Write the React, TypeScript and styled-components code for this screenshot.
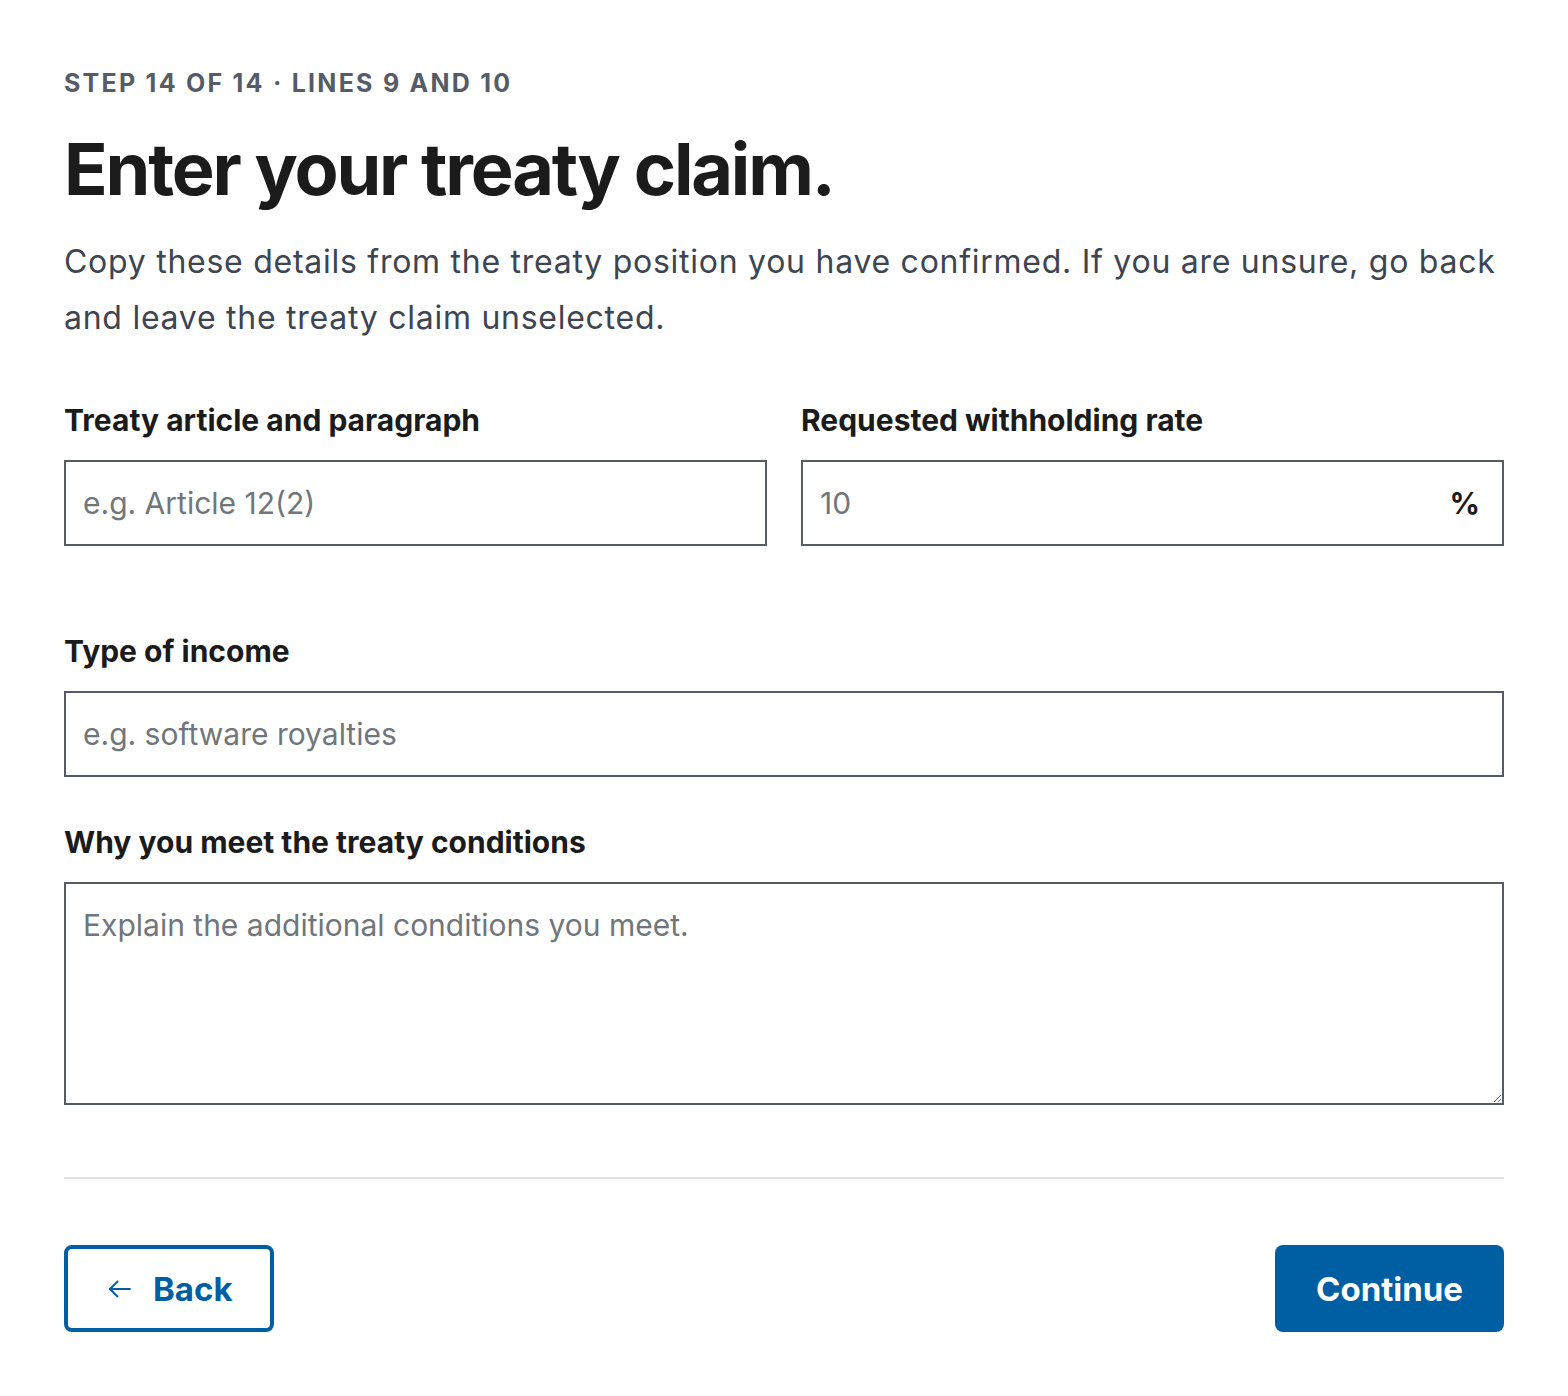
import React from 'react';
import styled, { createGlobalStyle } from 'styled-components';

const GlobalStyle = createGlobalStyle`
  * { box-sizing: border-box; }
  body {
    margin: 0;
    background: #ffffff;
    font-family: Inter, "Noto Sans", "Liberation Sans", sans-serif;
    color: #1b1b1b;
  }
`;

const Page = styled.main`
  padding: 64px 64px 64px;
  max-width: 1568px;
`;

const Eyebrow = styled.div`
  font-size: 25px;
  line-height: 38px;
  font-weight: 700;
  letter-spacing: 0.09em;
  text-transform: uppercase;
  color: #565c65;
`;

const Heading = styled.h1`
  margin: 24px 0 0;
  font-size: 72px;
  line-height: 86px;
  font-weight: 700;
  letter-spacing: -0.03em;
  color: #1b1b1b;
`;

const Lead = styled.p`
  margin: 22px 0 0;
  font-size: 32px;
  line-height: 56px;
  letter-spacing: 0.023em;
  color: #3d4551;
  max-width: 1440px;
`;

const Form = styled.form`
  margin-top: 55px;
  display: flex;
  flex-direction: column;
`;

const Row = styled.div<{ $cols?: number; $gapAfter?: number }>`
  display: grid;
  grid-template-columns: repeat(${p => p.$cols ?? 1}, 1fr);
  column-gap: 34px;
  margin-bottom: ${p => p.$gapAfter ?? 0}px;
`;

const Field = styled.div`
  display: flex;
  flex-direction: column;
`;

const Label = styled.label`
  font-size: 30px;
  line-height: 38px;
  font-weight: 700;
  color: #1b1b1b;
  margin-bottom: 21px;
`;

const InputWrap = styled.div`
  position: relative;
  display: flex;
`;

const TextInput = styled.input<{ $suffix?: boolean }>`
  width: 100%;
  height: 86px;
  border: 2px solid #565c65;
  border-radius: 0;
  padding: 0 ${p => (p.$suffix ? '72px' : '17px')} 0 17px;
  font-family: inherit;
  font-size: 30px;
  color: #1b1b1b;
  background: #fff;
  outline: none;
  &::placeholder { color: #71767a; }
`;

const Suffix = styled.span`
  position: absolute;
  right: 24px;
  top: 50%;
  transform: translateY(-50%);
  font-size: 30px;
  font-weight: 700;
  color: #1b1b1b;
`;

const TextArea = styled.textarea`
  width: 100%;
  height: 223px;
  border: 2px solid #565c65;
  border-radius: 0;
  padding: 21px 17px;
  font-family: inherit;
  font-size: 30px;
  line-height: 40px;
  color: #1b1b1b;
  resize: vertical;
  outline: none;
  display: block;
  &::placeholder { color: #71767a; }
`;

const Divider = styled.hr`
  border: 0;
  border-top: 2px solid #dfe1e2;
  margin: 72px 0 66px;
`;

const Actions = styled.div`
  display: flex;
  justify-content: space-between;
  align-items: center;
`;

const Button = styled.button<{ $variant: 'primary' | 'outline' }>`
  height: 87px;
  border-radius: 8px;
  font-family: inherit;
  font-size: 33px;
  font-weight: 700;
  display: inline-flex;
  align-items: center;
  gap: 18px;
  cursor: pointer;
  padding: 0 ${p => (p.$variant === 'primary' ? '41px' : '37px')};
  background: ${p => (p.$variant === 'primary' ? '#005ea2' : '#ffffff')};
  color: ${p => (p.$variant === 'primary' ? '#ffffff' : '#005ea2')};
  border: ${p => (p.$variant === 'primary' ? '0' : '4px solid #005ea2')};
`;

const ArrowLeft = () => (
  <svg width="30" height="30" viewBox="0 0 24 24" fill="none" stroke="currentColor" strokeWidth="1.5" strokeLinecap="round" strokeLinejoin="round">
    <path d="M20 12H4" />
    <path d="M10 6l-6 6 6 6" />
  </svg>
);

export default function App() {
  return (
    <>
      <GlobalStyle />
      <Page>
        <Eyebrow>Step 14 of 14 · Lines 9 and 10</Eyebrow>
        <Heading>Enter your treaty claim.</Heading>
        <Lead>
          Copy these details from the treaty position you have confirmed. If you are unsure, go back and leave the treaty claim unselected.
        </Lead>
        <Form onSubmit={e => e.preventDefault()}>
          <Row $cols={2} $gapAfter={86}>
            <Field>
              <Label htmlFor="article">Treaty article and paragraph</Label>
              <TextInput id="article" placeholder="e.g. Article 12(2)" />
            </Field>
            <Field>
              <Label htmlFor="rate">Requested withholding rate</Label>
              <InputWrap>
                <TextInput id="rate" placeholder="10" $suffix />
                <Suffix>%</Suffix>
              </InputWrap>
            </Field>
          </Row>
          <Row $gapAfter={46}>
            <Field>
              <Label htmlFor="income">Type of income</Label>
              <TextInput id="income" placeholder="e.g. software royalties" />
            </Field>
          </Row>
          <Row>
            <Field>
              <Label htmlFor="why">Why you meet the treaty conditions</Label>
              <TextArea id="why" placeholder="Explain the additional conditions you meet." />
            </Field>
          </Row>
          <Divider />
          <Actions>
            <Button type="button" $variant="outline">
              <ArrowLeft />
              Back
            </Button>
            <Button type="submit" $variant="primary">Continue</Button>
          </Actions>
        </Form>
      </Page>
    </>
  );
}
